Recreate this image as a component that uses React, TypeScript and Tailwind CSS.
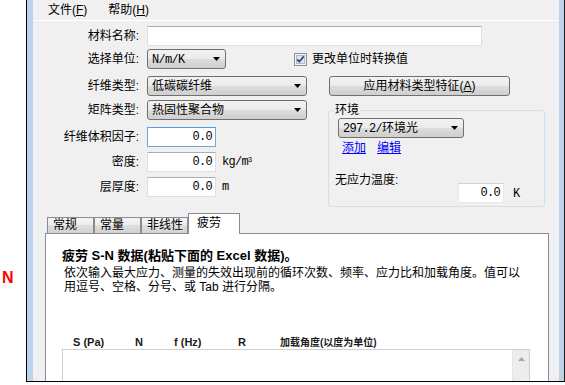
import React from 'react';

const Arrow = () => (
  <svg width="7" height="4" viewBox="0 0 7 4">
    <path d="M0 0h7L3.5 4z" fill="#000" />
  </svg>
);

const Combo = ({
  className,
  children,
}: {
  className: string;
  children: React.ReactNode;
}) => (
  <div
    className={`flex h-[20px] shrink-0 items-center justify-between rounded-[3px] border border-[#707070] bg-[linear-gradient(#f2f2f2,#ebebeb_50%,#dddddd_50%,#cfcfcf)] pl-[4px] pr-[5px] ${className}`}
  >
    <span className="whitespace-nowrap leading-[14px]">{children}</span>
    <Arrow />
  </div>
);

const Mono = ({ children }: { children: React.ReactNode }) => (
  <span className="font-['Liberation_Mono','Noto_Sans_CJK_SC',monospace] text-[12px] tracking-[-0.7px]">
    {children}
  </span>
);

const Label = ({ children }: { children: React.ReactNode }) => (
  <div className="w-[108px] shrink-0 whitespace-nowrap pr-[2px] text-right leading-[14px]">
    {children}
  </div>
);

const NumBox = ({ focused }: { focused?: boolean }) => (
  <div
    className={`flex h-[20px] w-[69px] shrink-0 items-center justify-end border bg-white pr-[3px] ${
      focused
        ? 'border-[#7da2ce] border-t-[#569de5]'
        : 'border-[#dbdfe6] border-t-[#abadb3]'
    }`}
  >
    <Mono>0.0</Mono>
  </div>
);

const Tab = ({ label, active }: { label: string; active?: boolean }) =>
  active ? (
    <div className="relative z-10 -mb-[1px] h-[21px] w-[52px] border border-b-0 border-[#898c95] bg-white pl-[8px] pt-[2px] leading-[14px]">
      {label}
    </div>
  ) : (
    <div className="h-[16px] w-[47px] border border-b-0 border-[#898c95] bg-[linear-gradient(#f5f5f5,#ececec_50%,#dedede_50%,#d3d3d3)] pl-[5px] leading-[14px]">
      {label}
    </div>
  );

export default function App() {
  return (
    <div className="flex h-[385px] w-[565px] overflow-hidden bg-white font-['Liberation_Sans','Noto_Sans_CJK_SC',sans-serif] text-[12px] text-black">
      {/* left margin with marker */}
      <div className="w-[26px] shrink-0 pl-[2px] pt-[270px]">
        <span className="text-[16px] font-bold leading-[16px] text-[#ff0000]">N</span>
      </div>

      {/* window */}
      <div className="flex h-[382px] w-[539px] shrink-0 border-b border-l border-r border-b-black border-l-black border-r-[#1e1a14]">
        <div className="w-[6px] shrink-0 bg-[#bcd4ec]" />

        <div className="flex w-[526px] shrink-0 flex-col overflow-hidden bg-[#f0f0f0]">
          {/* menu */}
          <div className="flex h-[21px] shrink-0 items-center gap-[21px] border-b border-white pl-[15px] leading-[14px]">
            <span>
              文件(<u>F</u>)
            </span>
            <span>
              帮助(<u>H</u>)
            </span>
          </div>

          {/* row 1 */}
          <div className="mt-[5px] flex items-center gap-[6px]">
            <Label>材料名称:</Label>
            <div className="h-[20px] w-[335px] border border-[#dbdfe6] border-t-[#abadb3] bg-white" />
          </div>

          {/* row 2 */}
          <div className="mt-[3px] flex items-center gap-[6px]">
            <Label>选择单位:</Label>
            <Combo className="w-[79px]">
              <Mono>N/m/K</Mono>
            </Combo>
            <div className="ml-[62px] flex items-center gap-[5px]">
              <svg width="13" height="13" viewBox="0 0 13 13">
                <rect x="0.5" y="0.5" width="12" height="12" fill="#f4f4f4" stroke="#8e8f8f" />
                <rect x="2.5" y="2.5" width="8" height="8" fill="#e2e6ec" stroke="#b4bac4" />
                <path d="M3.2 6.4l2.1 2.4L9.8 3.4" stroke="#2b3f86" strokeWidth="1.7" fill="none" />
              </svg>
              <span className="leading-[14px]">更改单位时转换值</span>
            </div>
          </div>

          {/* row 3 */}
          <div className="mt-[7px] flex items-center gap-[6px]">
            <Label>纤维类型:</Label>
            <Combo className="w-[160px]">低碳碳纤维</Combo>
            <div className="ml-[16px] flex h-[20px] w-[181px] items-center justify-center rounded-[3px] border border-[#707070] bg-[linear-gradient(#f2f2f2,#ebebeb_50%,#dddddd_50%,#cfcfcf)] leading-[14px]">
              应用材料类型特征(<u>A</u>)
            </div>
          </div>

          {/* rows 4-7 and environment group */}
          <div className="mt-[4px] flex items-start">
            <div className="flex flex-col">
              <div className="flex items-center gap-[6px]">
                <Label>矩阵类型:</Label>
                <Combo className="w-[160px]">热固性聚合物</Combo>
              </div>
              <div className="mt-[7px] flex items-center gap-[6px]">
                <Label>纤维体积因子:</Label>
                <NumBox focused />
              </div>
              <div className="mt-[5px] flex items-center gap-[6px]">
                <Label>密度:</Label>
                <NumBox />
                <Mono>
                  kg/m<sup className="text-[7px]">3</sup>
                </Mono>
              </div>
              <div className="mt-[5px] flex items-center gap-[6px]">
                <Label>层厚度:</Label>
                <NumBox />
                <Mono>m</Mono>
              </div>
            </div>

            <div className="relative ml-[21px] mt-[10px] h-[97px] w-[217px] shrink-0 rounded-[3px] border border-[#d5dfe5] pl-[6px] pt-[7px]">
              <span className="absolute -top-[8px] left-[5px] bg-[#f0f0f0] px-[1px] leading-[14px]">
                环境
              </span>
              <Combo className="ml-[3px] w-[126px]">
                <Mono>297.2/</Mono>环境光
              </Combo>
              <div className="mt-[3px] flex gap-[11px] pl-[7px] leading-[14px] text-[#0000ff]">
                <span className="underline">添加</span>
                <span className="underline">编辑</span>
              </div>
              <div className="mt-[19px] leading-[12px]">无应力温度:</div>
              <div className="-mt-[3px] flex items-center">
                <div className="ml-[123px] flex h-[20px] w-[46px] items-center justify-end border border-[#e3e9ef] border-t-[#d0d4da] bg-white pr-[3px]">
                  <Mono>0.0</Mono>
                </div>
                <span className="ml-[9px]">
                  <Mono>K</Mono>
                </span>
              </div>
            </div>
          </div>

          {/* tabs */}
          <div className="ml-[14px] mt-[6px] flex items-end">
            <Tab label="常规" />
            <Tab label="常量" />
            <Tab label="非线性" />
            <Tab label="疲劳" active />
          </div>
          <div className="ml-[12px] h-[170px] w-[504px] shrink-0 border border-[#898c95] bg-white pl-[16px] pt-[14px]">
            <div className="whitespace-nowrap text-[13px] font-bold leading-[16px]">
              疲劳 S-N 数据(粘贴下面的 Excel 数据)。
            </div>
            <div className="mt-[2px] whitespace-nowrap pl-[2px] leading-[14px]">
              <div>依次输入最大应力、测量的失效出现前的循环次数、频率、应力比和加载角度。值可以</div>
              <div>用逗号、空格、分号、或 Tab 进行分隔。</div>
            </div>
            <div className="mt-[41px] flex h-[14px] items-center whitespace-nowrap pl-[11px] font-bold text-[#1a1a1a]">
              <span className="w-[62px] text-[11px]">S (Pa)</span>
              <span className="w-[39px] text-[11px]">N</span>
              <span className="w-[64px] text-[11px]">f (Hz)</span>
              <span className="w-[42px] text-[11px]">R</span>
              <span className="text-[10px]">加载角度(以度为单位)</span>
            </div>
            <div className="flex h-[60px] w-[468px] justify-end border border-[#cfcfcf] bg-white">
              <div className="flex w-[17px] justify-center border-l border-[#e4e4e4] bg-[#ededed] pt-[7px]">
                <svg width="7" height="4" viewBox="0 0 7 4">
                  <path d="M3.5 0L7 4H0z" fill="#a6a6a6" />
                </svg>
              </div>
            </div>
          </div>
        </div>

        <div className="w-[5px] shrink-0 bg-[#bcd4ec]" />
      </div>
    </div>
  );
}
